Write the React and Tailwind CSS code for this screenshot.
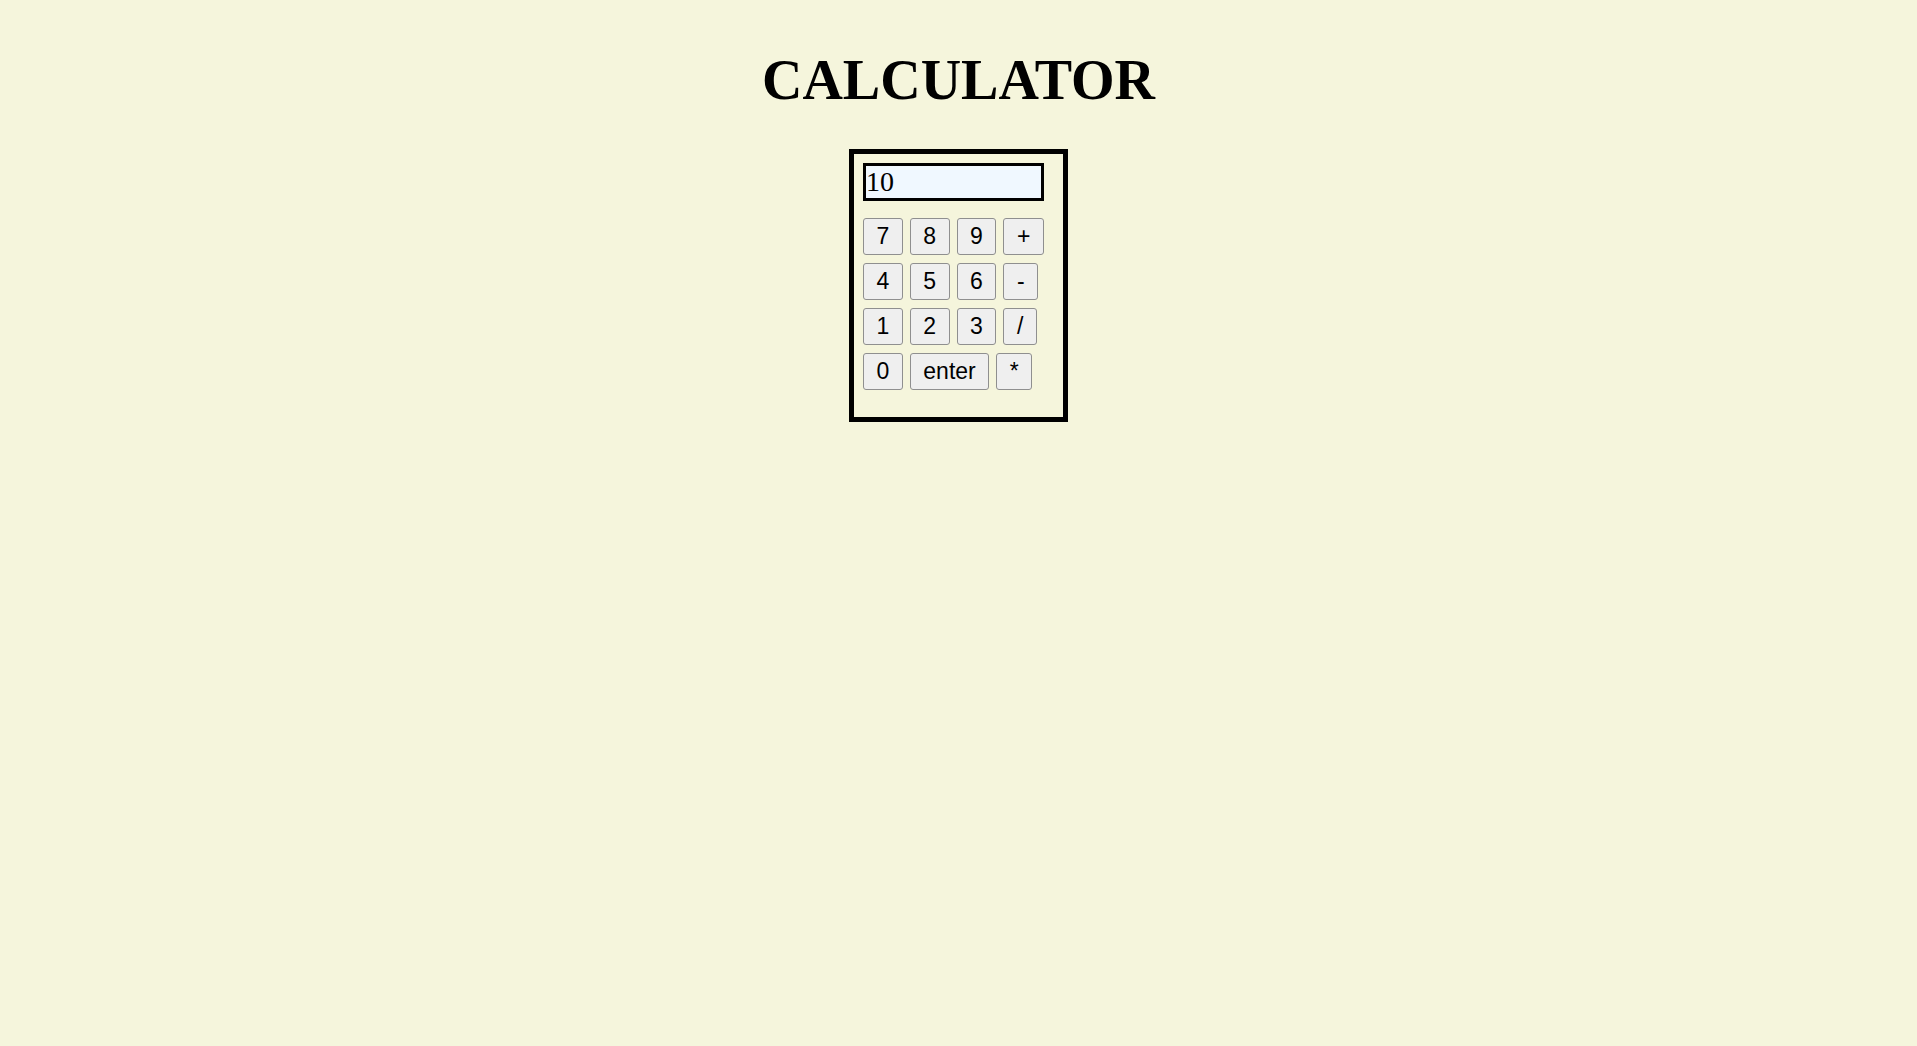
import React, { useState } from 'react';

const rows = [
    ['7', '8', '9', '+'],
    ['4', '5', '6', '-'],
    ['1', '2', '3', '/'],
    ['0', 'enter', '*'],
];

const Key = ({ label, onPress }) => (
    <button
        onClick={() => onPress(label)}
        className="h-[37px] px-[12.5px] bg-[#efefef] border border-[#8f8f8f] rounded-[3px] text-[23px] leading-none text-black hover:bg-[#e5e5e5]"
        style={{ fontFamily: '"Liberation Sans", Arial, sans-serif' }}
    >
        {label}
    </button>
);

const App = () => {
    const [display, setDisplay] = useState('10');

    const press = (key) => {
        if (key === 'enter') {
            try {
                // eslint-disable-next-line no-new-func
                setDisplay(String(Function(`return (${display})`)()));
            } catch {
                setDisplay('error');
            }
            return;
        }
        setDisplay((d) => d + key);
    };

    return (
        <div
            className="min-h-screen bg-[#f5f5dc] flex flex-col items-center"
            style={{ fontFamily: '"Liberation Serif", "Times New Roman", serif' }}
        >
            <h1 className="mt-[48px] mb-[37px] text-[56px] font-bold leading-[64px] text-black">CALCULATOR</h1>

            <div className="w-[219px] border-[5px] border-black pt-[9px] pl-[9px] pb-[27px]">
                <input
                    value={display}
                    onChange={(e) => setDisplay(e.target.value)}
                    className="block w-[181px] h-[38px] border-[3px] border-black bg-[#f0f8ff] px-0 text-[28px] leading-none text-black outline-none"
                    style={{ fontFamily: '"Liberation Serif", "Times New Roman", serif' }}
                />

                <div className="mt-[17px] flex flex-col gap-[8px]">
                    {rows.map((row, i) => (
                        <div key={i} className="flex gap-[7px]">
                            {row.map((k) => (
                                <Key key={k} label={k} onPress={press} />
                            ))}
                        </div>
                    ))}
                </div>
            </div>
        </div>
    );
};

export default App;
